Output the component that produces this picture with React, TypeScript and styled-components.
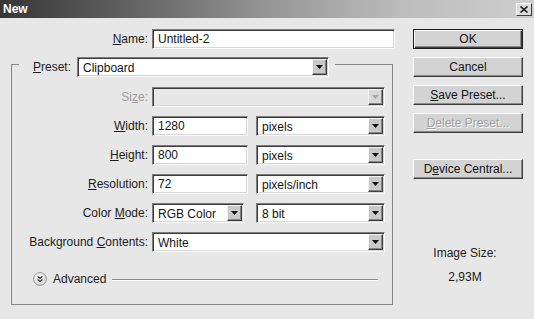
import React from "react";
import styled, { createGlobalStyle } from "styled-components";

const GlobalStyle = createGlobalStyle`
  html, body {
    margin: 0;
    padding: 0;
    background: #e7e7e7;
  }
  body {
    font-family: "Liberation Sans", Arial, sans-serif;
    font-size: 12px;
    color: #1c1c1c;
  }
`;

const Window = styled.div`
  width: 534px;
  height: 319px;
  display: flex;
  flex-direction: column;
  background: #e7e7e7;
  overflow: hidden;
`;

const TitleBar = styled.div`
  height: 18px;
  flex: none;
  box-sizing: border-box;
  display: flex;
  align-items: center;
  justify-content: space-between;
  padding: 0 2px 0 3px;
  background: linear-gradient(
    90deg,
    #363636 0%,
    #5a5a5a 20%,
    #959595 50%,
    #bcbcbc 75%,
    #cecece 100%
  );
`;

const Title = styled.span`
  color: #fff;
  font-weight: bold;
  font-size: 12px;
`;

const CloseButton = styled.div`
  width: 16px;
  height: 13px;
  box-sizing: border-box;
  display: flex;
  align-items: center;
  justify-content: center;
  background: #dcdcdc;
  border: 1px solid;
  border-color: #fff #3e3e3e #3e3e3e #fff;
`;

const Body = styled.div`
  flex: 1;
  display: flex;
  gap: 17px;
  padding: 11px 11px 0 11px;
`;

const LeftPane = styled.div`
  width: 385px;
  display: flex;
  flex-direction: column;
`;

const RightPane = styled.div`
  width: 110px;
  display: flex;
  flex-direction: column;
  gap: 8px;
`;

const Row = styled.div`
  display: flex;
  align-items: center;
  height: 20px;
`;

const Label = styled.label<{ $w: number; $disabled?: boolean }>`
  flex: none;
  width: ${(p) => p.$w}px;
  margin-right: 4px;
  text-align: right;
  white-space: nowrap;
  color: ${(p) => (p.$disabled ? "#9c9c9c" : "#1c1c1c")};
`;

const Controls = styled.div<{ $gap: number }>`
  display: flex;
  gap: ${(p) => p.$gap}px;
`;

const sunken = `
  border: 1px solid;
  border-color: #7c7c7c #fafafa #fafafa #7c7c7c;
  box-shadow: inset 1px 1px 0 #3c3c3c, inset -1px -1px 0 #d6d6d6;
`;

const TextInput = styled.input<{ $w: number }>`
  width: ${(p) => p.$w}px;
  height: 20px;
  box-sizing: border-box;
  margin: 0;
  padding: 0 5px;
  font: inherit;
  color: #141414;
  background: #fff;
  outline: none;
  ${sunken}
`;

const SelectBox = styled.div<{ $w: number; $disabled?: boolean }>`
  width: ${(p) => p.$w}px;
  height: 20px;
  box-sizing: border-box;
  display: flex;
  align-items: center;
  background: ${(p) => (p.$disabled ? "#e7e7e7" : "#fff")};
  ${sunken}
`;

const SelectValue = styled.span`
  flex: 1;
  padding-left: 5px;
  padding-top: 1px;
  color: #141414;
  white-space: nowrap;
  overflow: hidden;
`;

const ArrowButton = styled.div<{ $disabled?: boolean }>`
  flex: none;
  width: 15px;
  height: 16px;
  margin-right: 1px;
  box-sizing: border-box;
  display: flex;
  align-items: center;
  justify-content: center;
  background: ${(p) => (p.$disabled ? "#d8d8d8" : "#c9c9c9")};
  border: 1px solid;
  border-color: #f4f4f4 #404040 #404040 #f4f4f4;
  box-shadow: inset -1px -1px 0 #848484;
`;

const Group = styled.section`
  width: 382px;
  box-sizing: border-box;
  margin-top: 15px;
  padding-bottom: 17px;
  border: 1px solid #888;
`;

const GroupHeader = styled.div`
  display: flex;
  margin-top: -8px;
`;

const Legend = styled.div`
  display: flex;
  align-items: center;
  margin-left: 7px;
  padding: 0 6px 0 14px;
  background: #e7e7e7;
`;

const LegendLabel = styled.label`
  margin-right: 6px;
`;

const Rows = styled.div`
  display: flex;
  flex-direction: column;
  gap: 9px;
  margin-top: 10px;
`;

const AdvancedRow = styled.div`
  display: flex;
  align-items: center;
  height: 16px;
  margin-top: 19px;
  margin-right: 14px;
  padding-left: 21px;
  gap: 6px;
`;

const Rule = styled.div`
  flex: 1;
  height: 1px;
  background: #8a8a8a;
  box-shadow: 0 1px 0 #fbfbfb;
`;

const Button = styled.button<{ $primary?: boolean; $gap?: number }>`
  width: 110px;
  height: 20px;
  box-sizing: border-box;
  margin: ${(p) => p.$gap ?? 0}px 0 0 0;
  padding: 0;
  font: inherit;
  color: #141414;
  background: #d3d3d3;
  border: 1px solid;
  border-color: ${(p) =>
    p.$primary ? "#1e1e1e" : "#fcfcfc #3e3e3e #3e3e3e #fcfcfc"};
  box-shadow: ${(p) =>
    p.$primary
      ? "inset 1px 1px 0 #fcfcfc, inset -1px -1px 0 #3e3e3e, inset -2px -2px 0 #8a8a8a"
      : "inset -1px -1px 0 #8a8a8a"};
  &:disabled {
    color: #a0a0a0;
    text-shadow: 1px 1px 0 #fff;
  }
`;

const ImageSize = styled.div`
  margin-top: 59px;
  padding-right: 6px;
  display: flex;
  flex-direction: column;
  align-items: center;
  gap: 10px;
  line-height: 14px;
`;

function Arrow({ disabled }: { disabled?: boolean }) {
  return (
    <ArrowButton $disabled={disabled}>
      <svg width="7" height="4" viewBox="0 0 7 4">
        <polygon points="0,0 7,0 3.5,4" fill={disabled ? "#a4a4a4" : "#111"} />
      </svg>
    </ArrowButton>
  );
}

function Select({ w, value, disabled }: { w: number; value?: string; disabled?: boolean }) {
  return (
    <SelectBox $w={w} $disabled={disabled}>
      <SelectValue>{value}</SelectValue>
      <Arrow disabled={disabled} />
    </SelectBox>
  );
}

function ChevronIcon() {
  return (
    <svg width="14" height="14" viewBox="0 0 14 14">
      <defs>
        <radialGradient id="adv" cx="40%" cy="35%" r="70%">
          <stop offset="0%" stopColor="#ffffff" />
          <stop offset="100%" stopColor="#cfcfcf" />
        </radialGradient>
      </defs>
      <circle cx="7" cy="7" r="6.4" fill="url(#adv)" stroke="#9a9a9a" strokeWidth="1" />
      <path d="M4.6 4.4 L7 6.4 L9.4 4.4 M4.6 7.4 L7 9.4 L9.4 7.4" fill="none" stroke="#2a2a2a" strokeWidth="1.2" />
    </svg>
  );
}

export default function App() {
  return (
    <>
      <GlobalStyle />
      <Window>
        <TitleBar>
          <Title>New</Title>
          <CloseButton>
            <svg width="8" height="7" viewBox="0 0 8 7">
              <path d="M0.5 0.5 L7.5 6.5 M7.5 0.5 L0.5 6.5" stroke="#111" strokeWidth="1.5" />
            </svg>
          </CloseButton>
        </TitleBar>
        <Body>
          <LeftPane>
            <Row>
              <Label $w={137}>
                <u>N</u>ame:
              </Label>
              <TextInput $w={243} defaultValue="Untitled-2" />
            </Row>
            <Group>
              <GroupHeader>
                <Legend>
                  <LegendLabel>
                    <u>P</u>reset:
                  </LegendLabel>
                  <Select w={252} value="Clipboard" />
                </Legend>
              </GroupHeader>
              <Rows>
                <Row>
                  <Label $w={136} $disabled>
                    Si<u>z</u>e:
                  </Label>
                  <Select w={233} disabled />
                </Row>
                <Row>
                  <Label $w={136}>
                    <u>W</u>idth:
                  </Label>
                  <Controls $gap={8}>
                    <TextInput $w={96} defaultValue="1280" />
                    <Select w={129} value="pixels" />
                  </Controls>
                </Row>
                <Row>
                  <Label $w={136}>
                    <u>H</u>eight:
                  </Label>
                  <Controls $gap={8}>
                    <TextInput $w={96} defaultValue="800" />
                    <Select w={129} value="pixels" />
                  </Controls>
                </Row>
                <Row>
                  <Label $w={136}>
                    <u>R</u>esolution:
                  </Label>
                  <Controls $gap={8}>
                    <TextInput $w={96} defaultValue="72" />
                    <Select w={129} value="pixels/inch" />
                  </Controls>
                </Row>
                <Row>
                  <Label $w={136}>
                    Color <u>M</u>ode:
                  </Label>
                  <Controls $gap={12}>
                    <Select w={92} value="RGB Color" />
                    <Select w={129} value="8 bit" />
                  </Controls>
                </Row>
                <Row>
                  <Label $w={136}>
                    Background <u>C</u>ontents:
                  </Label>
                  <Select w={233} value="White" />
                </Row>
              </Rows>
              <AdvancedRow>
                <ChevronIcon />
                <span>Advanced</span>
                <Rule />
              </AdvancedRow>
            </Group>
          </LeftPane>
          <RightPane>
            <Button $primary>OK</Button>
            <Button>Cancel</Button>
            <Button>
              <u>S</u>ave Preset...
            </Button>
            <Button disabled>
              <u>D</u>elete Preset...
            </Button>
            <Button $gap={18}>
              D<u>e</u>vice Central...
            </Button>
            <ImageSize>
              <span>Image Size:</span>
              <span>2,93M</span>
            </ImageSize>
          </RightPane>
        </Body>
      </Window>
    </>
  );
}
